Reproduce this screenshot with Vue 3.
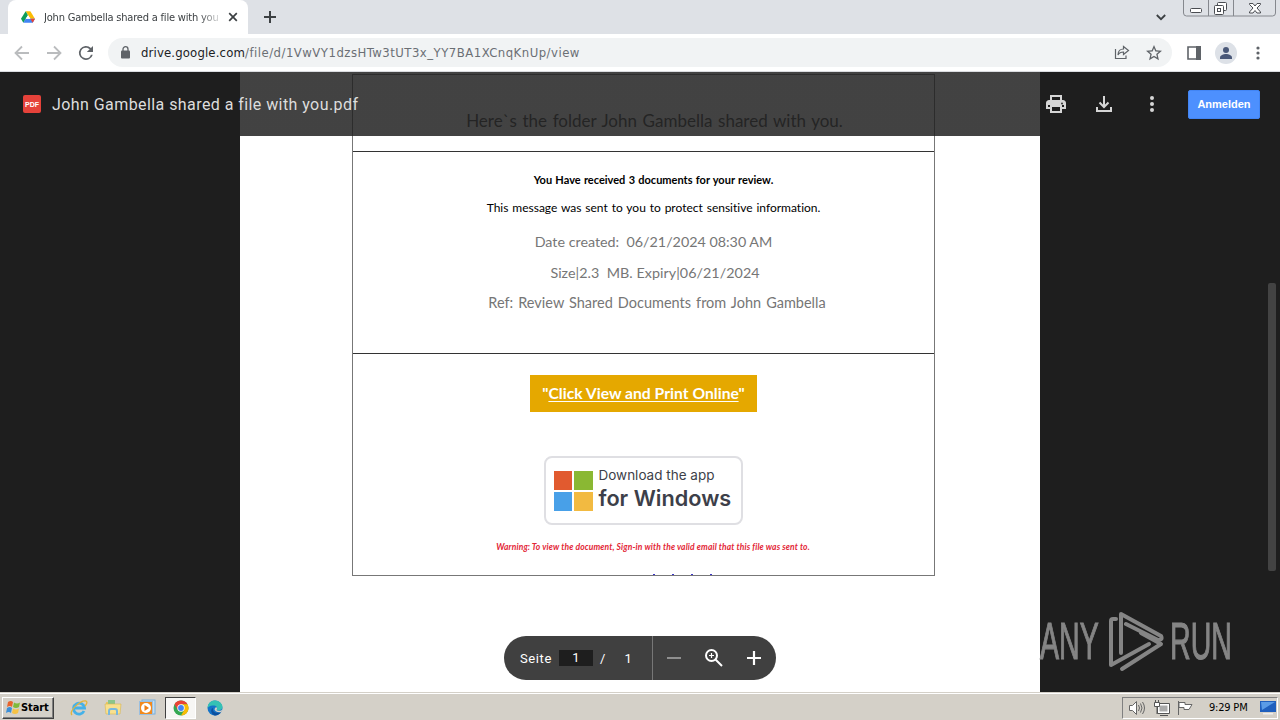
<script setup>
import { ref } from 'vue';

const page = ref(1);

const details = [
  { cls: 'date', text: 'Date created:  06/21/2024 08:30 AM' },
  { cls: 'size', text: 'Size|2.3  MB. Expiry|06/21/2024' },
  { cls: 'ref', text: 'Ref: Review Shared Documents from John Gambella' },
];
</script>

<template>
  <div class="desktop">
    <div class="tab-strip">
      <div class="tab">
        <svg class="drive-icon" width="14" height="14" viewBox="0 0 24 22">
          <path d="M8 1h8l8 13h-8z" fill="#fbbc04" />
          <path d="M8 1l4 7L4 21 0 14z" fill="#0f9d58" />
          <path d="M8 14h16l-4 7H4z" fill="#4285f4" />
          <path d="M16 14h8l-4 7z" fill="#ea4335" />
          <path d="M12 8l4 6H8z" fill="#fff" />
        </svg>
        <span class="tab-title">John Gambella shared a file with you</span>
        <svg class="tab-close" width="10" height="10" viewBox="0 0 10 10">
          <path d="M1.2 1.2l7.6 7.6M8.8 1.2L1.2 8.8" stroke="#3c4043" stroke-width="1.7" />
        </svg>
      </div>
      <svg class="new-tab" width="12" height="12" viewBox="0 0 12 12">
        <path d="M6 0v12M0 6h12" stroke="#3c4043" stroke-width="2" />
      </svg>
      <svg class="chevron" width="10" height="7" viewBox="0 0 10 7">
        <path d="M.8 1L5 5.2 9.2 1" fill="none" stroke="#3c4043" stroke-width="1.8" />
      </svg>
      <svg class="window-buttons" width="94" height="18" viewBox="0 0 94 18">
        <path d="M.5 0v13q0 3 3 3h86q3 0 3-3V0M25.500 0v16M50.500 0v16" fill="none" stroke="#85888e" />
        <g fill="#fff" stroke="#4a4d52">
          <rect x="7.500" y="8.500" width="11" height="4" rx="1" />
          <rect x="34.500" y="2.500" width="9" height="8" rx="1" />
          <rect x="31.500" y="5.500" width="9" height="9" rx="1" />
          <rect x="34.500" y="8.500" width="3" height="3" />
          <path d="M66.500 3.500h3.500l2 2.500 2-2.500h3.500v1L74 8l3.500 4v1H74l-2-2.500-2 2.500h-3.500v-1L70 8l-3.500-3.500z" />
        </g>
      </svg>
    </div>

    <div class="toolbar">
      <svg class="nav back" width="16" height="16" viewBox="0 0 16 16">
        <path d="M15 8H2M8 1.500L1.500 8 8 14.500" />
      </svg>
      <svg class="nav forward" width="16" height="16" viewBox="0 0 16 16">
        <path d="M1 8h13M8 1.500L14.500 8 8 14.500" />
      </svg>
      <svg class="reload" width="24" height="24" viewBox="0 0 24 24">
        <path fill="#5f6368" d="M17.650 6.350A8 8 0 1 0 19.730 14h-2.080A6 6 0 1 1 12 6c1.660 0 3.140.69 4.220 1.780L13 11h7V4z" transform="translate(1.400 1.400) scale(.88)" />
      </svg>
      <div class="address">
        <svg class="lock" width="9" height="13" viewBox="0 0 9 13">
          <rect y="4.500" width="9" height="8" rx="1" fill="#5f6368" />
          <path d="M2 5V3.200a2.500 2.500 0 0 1 5 0V5" fill="none" stroke="#5f6368" stroke-width="1.300" />
        </svg>
        <span class="url"><b>drive.google.com</b>/file/d/1VwVY1dzsHTw3tUT3x_YY7BA1XCnqKnUp/view</span>
        <svg class="share" width="16" height="15" viewBox="0 0 16 15" fill="none" stroke="#5f6368" stroke-width="1.200">
          <path d="M1.500 4v9.500H12V10.500M9.500 1.500l5 4-5 4V7C7 7 5 8 4 10c0-4 2.500-6 5.500-6z" />
        </svg>
        <svg class="star" width="16" height="16" viewBox="2 2 20 20">
          <path fill="#5f6368" d="M22 9.240l-7.190-.62L12 2 9.190 8.630 2 9.240l5.460 4.730L5.820 21 12 17.270 18.180 21l-1.630-7.030zM12 15.400l-3.760 2.270 1-4.280-3.320-2.880 4.380-.38L12 6.100l1.710 4.040 4.380.38-3.320 2.880 1 4.280z" />
        </svg>
      </div>
      <svg class="side-panel" width="14" height="14" viewBox="0 0 14 14">
        <path d="M1 1h12v12H1z" fill="none" stroke="#5f6368" stroke-width="1.600" />
        <path d="M9 0h5v14H9z" fill="#5f6368" />
      </svg>
      <svg class="avatar" width="22" height="22" viewBox="0 0 22 22">
        <circle cx="11" cy="11" r="11" fill="#dde1e7" />
        <circle cx="11" cy="8" r="3" fill="#4a5878" />
        <path d="M5 17v-1.500c0-2.300 3.500-3.500 6-3.500s6 1.200 6 3.500V17z" fill="#4a5878" />
      </svg>
      <svg class="menu" width="4" height="14" viewBox="0 0 4 14" fill="#5f6368">
        <circle cx="2" cy="2" r="1.600" /><circle cx="2" cy="7" r="1.600" /><circle cx="2" cy="12" r="1.600" />
      </svg>
    </div>

    <main class="viewer">
      <div class="sheet">
        <div class="frame">
          <section class="cell heading-cell">
            <p class="folder">Here`s the folder John Gambella shared with you.</p>
          </section>
          <section class="cell info-cell">
            <p class="received">You Have received 3 documents for your review.</p>
            <p class="message">This message was sent to you to protect sensitive information.</p>
            <p v-for="line in details" :key="line.cls" class="detail" :class="line.cls">{{ line.text }}</p>
          </section>
          <section class="cell action-cell">
            <a class="view-button">"<u>Click View and Print Online</u>"</a>
            <div class="download">
              <div class="win-logo"><i></i><i></i><i></i><i></i></div>
              <div class="download-text">
                <span class="small">Download the app</span>
                <span class="big">for Windows</span>
              </div>
            </div>
            <p class="warning">Warning: To view the document, Sign-in with the valid email that this file was sent to.</p>
            <div class="cut-line"><i></i><i></i><i></i><i></i></div>
          </section>
        </div>
      </div>

      <header class="viewer-bar">
        <span class="pdf-icon"><span>PDF</span></span>
        <span class="file-name">John Gambella shared a file with you.pdf</span>
        <svg class="print" width="24" height="24" viewBox="0 0 24 24" fill="#d6d6d6">
          <path d="M19 8h-1V3H6v5H5c-1.660 0-3 1.340-3 3v6h4v4h12v-4h4v-6c0-1.660-1.340-3-3-3zM8 5h8v3H8V5zm8 14H8v-4h8v4zm2-4v-2H6v2H4v-4c0-.55.45-1 1-1h14c.55 0 1 .45 1 1v4h-2z" />
          <path d="M4 10h16v3H4z" /><circle cx="18" cy="11.500" r="1" fill="#333" />
        </svg>
        <svg class="save" width="24" height="24" viewBox="0 0 24 24" fill="none" stroke="#d6d6d6" stroke-width="2">
          <path d="M12 4v10M7.500 10.500L12 15l4.500-4.500M5 15v4h14v-4" />
        </svg>
        <svg class="more" width="24" height="24" viewBox="0 0 24 24" fill="#d6d6d6">
          <circle cx="12" cy="6" r="2" /><circle cx="12" cy="12" r="2" /><circle cx="12" cy="18" r="2" />
        </svg>
        <button class="sign-in">Anmelden</button>
      </header>

      <div class="scrollbar"></div>

      <div class="pager">
        <span class="label">Seite</span>
        <span class="current">{{ page }}</span>
        <span class="slash">/</span>
        <span class="total">1</span>
        <div class="zoom">
          <svg width="14" height="14" viewBox="0 0 14 14"><path d="M0 7h14" stroke="#8f8f8f" stroke-width="2" /></svg>
          <svg width="18" height="18" viewBox="0 0 18 18" fill="none" stroke="#fff" stroke-width="2">
            <circle cx="6.500" cy="6.500" r="5.500" /><path d="M10.500 10.500l6.500 6.500" />
            <path d="M6.500 4v5M4 6.500h5" stroke-width="1.200" />
          </svg>
          <svg width="14" height="14" viewBox="0 0 14 14"><path d="M7 0v14M0 7h14" stroke="#fff" stroke-width="2.200" /></svg>
        </div>
      </div>

      <div class="watermark">
        <span class="word any">ANY</span>
        <svg width="56" height="64" viewBox="0 0 56 64" fill="none" stroke="#858585" stroke-width="4" stroke-linecap="round" stroke-linejoin="round">
          <path d="M8 9H5q-2 0-2 2v44l38-21" />
          <path d="M13 43V4l40 22q2 4-3 4L18 14" />
          <path d="M33 23l20 11-39 25" />
        </svg>
        <span class="word run">RUN</span>
      </div>
    </main>

    <footer class="taskbar">
      <div class="start">
        <svg width="15" height="15" viewBox="0 0 15 15">
          <path d="M2 2q3-2 5 0L6 7Q4 5 1 7z" fill="#e8642d" />
          <path d="M8 2.500q3 2 6 0L13 7q-3 2-6 0z" fill="#7fba3c" />
          <path d="M1 8q3-2 5 0l-1 5Q3 11 0 13z" fill="#3c8fd8" />
          <path d="M7 8.500q3 2 6 0L12 13q-3 2-6 0z" fill="#f6c244" />
        </svg>
        <span>Start</span>
      </div>
      <div class="task ie">
        <svg width="18" height="18" viewBox="0 0 18 18" fill="none">
          <path d="M14 12a5.500 5.500 0 1 1 .5-3H5" stroke="#45b1e8" stroke-width="2.800" />
          <path d="M2 16C-2 12 11 1 16 2c2 1 0 4-1 5" stroke="#e3b43b" stroke-width="1.300" />
        </svg>
      </div>
      <div class="task">
        <svg width="18" height="18" viewBox="0 0 18 18">
          <path d="M2 3h5l1 2h7v9H2z" fill="#e9c763" /><path d="M4 1h7v4H4z" fill="#8bc58a" />
          <path d="M1 5h16l-1 10H2z" fill="#f8e08e" stroke="#d7b552" stroke-width=".6" />
          <path d="M5 16v-4q0-2 2-2h4q2 0 2 2v4" fill="none" stroke="#79b8dd" stroke-width="2" />
        </svg>
      </div>
      <div class="task">
        <svg width="18" height="18" viewBox="0 0 18 18">
          <rect x="4" y="1" width="13" height="14" fill="#c3def2" stroke="#78aeda" />
          <rect x="1.500" y="2.500" width="13" height="13" fill="#f28a1d" stroke="#9abfe0" />
          <circle cx="8" cy="9" r="5" fill="#fff" /><path d="M6.500 6l4.500 3-4.500 3z" fill="#ee7d12" />
        </svg>
      </div>
      <div class="task active">
        <svg width="16" height="16" viewBox="0 0 16 16">
          <circle cx="8" cy="8" r="7.500" fill="#34a853" />
          <path d="M1.500 4.250A7.500 7.500 0 0 1 14.500 4.250H8L4.750 9.900z" fill="#ea4335" />
          <path d="M14.500 4.250A7.500 7.500 0 0 1 8 15.500l3.250-5.600L8 4.250z" fill="#fbbc04" />
          <circle cx="8" cy="8" r="3.700" fill="#fff" /><circle cx="8" cy="8" r="2.900" fill="#4285f4" />
        </svg>
      </div>
      <div class="task">
        <svg width="16" height="16" viewBox="0 0 16 16">
          <circle cx="8" cy="8" r="7.500" fill="#1473c8" />
          <path d="M.5 8C1 2 5 .5 8 .5c4 0 7.500 3 7.500 6.500 0 3-4 4-6 3 2-3-1-5-4-4.500C3 5.500 1 7 .5 8z" fill="#35c1b4" />
          <path d="M6 8c-1 4 3 6 8 4-2 3-5 3.500-6.500 3.500C4 14 3 9 6 8z" fill="#0c4f9e" />
          <path d="M9 7c2 1 .5 3 .5 3 2 1.500 5 1 6-1l-1 3c-4 1-7-1-7-3z" fill="#d4d0c8" />
        </svg>
      </div>
      <div class="tray">
        <svg width="18" height="16" viewBox="0 0 18 16" fill="none" stroke="#666">
          <path d="M1.500 5.500h3l4-4v13l-4-4h-3z" fill="#fff" /><path d="M10.500 5q2 3 0 6M12.500 3.500q3 4.500 0 9M14.500 2q4 6 0 12" />
        </svg>
        <svg width="17" height="16" viewBox="0 0 17 16" fill="none" stroke="#555">
          <path d="M5.500 4.500h10v8h-10z" fill="#aaa" stroke="#fff" stroke-width="2" /><path d="M4.500 3.500h12v10h-12zM7 15.500h8" />
          <path d="M1.500 2.500h5v4h-5zM2.500 0v2M5.500 0v2M4 7v7" fill="#fff" />
        </svg>
        <svg width="17" height="16" viewBox="0 0 17 16" fill="#fff" stroke="#666">
          <path d="M1.500 1v14M2 2.500h6v2h7l-3 5H7v-2H2z" />
        </svg>
        <span class="clock">9:29 PM</span>
        <svg class="show-desktop" width="16" height="14" viewBox="0 0 16 14">
          <path d="M0 0h16v11H0z" fill="#1f5fbd" /><path d="M1 1h14L2 9z" fill="#5a9be6" /><path d="M3 12h10v1.500H3z" fill="#eee" />
        </svg>
      </div>
    </footer>
  </div>
</template>

<style>
body {
  margin: 0;
  overflow: hidden;
}
</style>

<style scoped>
* {
  box-sizing: border-box;
}

p {
  margin: 0;
}

svg {
  display: block;
  flex: none;
}

.desktop {
  width: 1280px;
  height: 720px;
  display: flex;
  flex-direction: column;
  overflow: hidden;
  font-family: "Liberation Sans", Arial, sans-serif;
}

.tab-strip {
  height: 34px;
  flex: none;
  display: flex;
  background: #dee1e6;
  padding-left: 8px;
}

.tab {
  width: 240px;
  height: 34px;
  display: flex;
  align-items: center;
  padding: 0 12px 0 13px;
  background: #fff;
  border-radius: 8px 8px 0 0;
}

.tab-title {
  width: 175px;
  margin-left: 9px;
  white-space: nowrap;
  font-family: "DejaVu Sans Condensed", "DejaVu Sans", sans-serif;
  font-size: 11px;
  letter-spacing: -0.2px;
  color: #3c4043;
  mask-image: linear-gradient(to right, #000 155px, transparent 180px);
}

.tab-close {
  margin-left: 9px;
}

.new-tab {
  margin: 11px 0 0 16px;
}

.chevron {
  margin: 14px 0 0 auto;
}

.window-buttons {
  margin: 0 3px 0 17px;
}

.toolbar {
  height: 38px;
  flex: none;
  display: flex;
  align-items: center;
  padding: 0 20px 0 14px;
  background: #fff;
  border-bottom: 1px solid #dadce0;
}

.nav {
  fill: none;
  stroke: #babcbe;
  stroke-width: 1.8;
}

.forward {
  margin-left: 16px;
}

.reload {
  margin-left: 12px;
}

.address {
  width: 1064px;
  height: 29px;
  margin-left: 10px;
  display: flex;
  align-items: center;
  border-radius: 15px;
  background: #f1f3f4;
}

.lock {
  margin-left: 13px;
}

.url {
  margin-left: 11px;
  font-family: "DejaVu Sans Condensed", "DejaVu Sans", sans-serif;
  font-size: 13px;
  letter-spacing: 0.48px;
  color: #6b6f74;
  white-space: nowrap;
}

.url b {
  font-weight: 400;
  letter-spacing: 0.15px;
  color: #202124;
}

.share {
  margin-left: auto;
}

.star {
  margin: 0 10px 0 16px;
}

.side-panel {
  margin-left: 15px;
}

.avatar {
  margin-left: 14px;
}

.menu {
  margin-left: auto;
}

.viewer {
  position: relative;
  height: 620px;
  flex: none;
  overflow: hidden;
  background: #1e1e1e;
}

.sheet {
  width: 800px;
  height: 620px;
  margin: 0 auto;
  padding: 2px 0 0 112px;
  background: #fff;
  font-family: Lato, "Liberation Sans", sans-serif;
  font-variant-ligatures: none;
}

.frame {
  width: 583px;
  border: solid #777;
  border-width: 1px;
}

.cell {
  display: flex;
  flex-direction: column;
  align-items: center;
  white-space: pre;
}

.cell + .cell {
  border-top: 1px solid #333;
}

.heading-cell {
  height: 76px;
  padding: 34px 0 0 22px;
}

.folder {
  font-size: 17px;
  line-height: 24px;
  word-spacing: 1.3px;
  color: #444;
}

.info-cell {
  height: 202px;
  padding: 21px 0 0 20px;
}

.received {
  height: 28px;
  font-size: 11px;
  line-height: 14px;
  font-weight: 700;
  word-spacing: 0.6px;
}

.message {
  height: 30px;
  font-size: 12px;
  line-height: 14px;
  word-spacing: 0.8px;
}

.detail {
  height: 31px;
  font-size: 14.3px;
  line-height: 22px;
  color: #767676;
}

.size {
  letter-spacing: 0.05px;
  margin-left: 3px;
}

.ref {
  margin: -1px 0 0 7px;
  font-size: 14.5px;
  word-spacing: 1.3px;
}

.action-cell {
  height: 222px;
  padding-top: 21px;
}

.view-button {
  width: 227px;
  height: 37px;
  line-height: 37px;
  text-align: center;
  background: #e5a800;
  color: #fff;
  font-size: 15.7px;
  font-weight: 700;
}

.view-button u {
  text-underline-offset: 2px;
  text-decoration-thickness: 1px;
}

.download {
  width: 199px;
  height: 69px;
  margin: 44px 1px 0 0;
  display: flex;
  padding: 13px 0 0 8px;
  border: 2px solid #dfdfe3;
  border-radius: 8px;
  font-family: Inter, sans-serif;
  color: #3d3f49;
}

.win-logo {
  width: 39px;
  height: 40px;
  display: grid;
  grid-template-columns: 1fr 1fr;
  gap: 2px;
}

.win-logo i:nth-child(1) { background: #e15a2f; }
.win-logo i:nth-child(2) { background: #8ab833; }
.win-logo i:nth-child(3) { background: #48a0e8; }
.win-logo i:nth-child(4) { background: #f2ba41; }

.download-text {
  margin: -4px 0 0 6px;
  display: flex;
  flex-direction: column;
}

.small {
  font-size: 13.5px;
  line-height: 17px;
}

.big {
  font-size: 21.7px;
  line-height: 28px;
  font-weight: 600;
}

.warning {
  margin: 15px 0 0 19px;
  font-size: 8.5px;
  line-height: 14px;
  letter-spacing: 0.13px;
  font-style: italic;
  font-weight: 700;
  color: #e32636;
}

.cut-line {
  width: 60px;
  display: flex;
  justify-content: space-between;
  margin: 20px 0 0 78px;
}

.cut-line i {
  width: 2px;
  height: 1px;
  background: #3a35c8;
}

.viewer-bar {
  position: absolute;
  top: 0;
  left: 0;
  width: 1280px;
  height: 64px;
  display: flex;
  align-items: center;
  padding: 0 20px 0 23px;
  background: linear-gradient(to right, transparent 240px, rgba(30, 30, 30, 0.84) 240px, rgba(30, 30, 30, 0.84) 1040px, transparent 1040px);
}

.pdf-icon {
  width: 18px;
  height: 18px;
  display: flex;
  align-items: center;
  justify-content: center;
  border-radius: 2px;
  background: #e5423a;
  color: #fff;
  font-size: 7px;
  font-weight: 700;
}

.file-name {
  margin-left: 11px;
  font-family: Roboto, sans-serif;
  font-size: 16px;
  letter-spacing: 0.43px;
  color: #ddd;
}

.print {
  margin-left: auto;
}

.save,
.more {
  margin-left: 24px;
}

.sign-in {
  width: 72px;
  height: 29px;
  margin-left: 24px;
  padding: 0;
  border: 1px solid #4285f4;
  border-radius: 2px;
  background: #4d90fe;
  color: #fff;
  font: 700 11px "Liberation Sans", sans-serif;
}

.scrollbar {
  position: absolute;
  top: 211px;
  right: 4px;
  width: 8px;
  height: 288px;
  border-radius: 2px;
  background: #434343;
}

.pager {
  position: absolute;
  top: 564px;
  left: 504px;
  width: 272px;
  height: 44px;
  display: flex;
  align-items: center;
  padding-left: 16px;
  border-radius: 22px;
  background: #404040;
  color: #fff;
  font-family: Roboto, sans-serif;
  font-size: 13px;
}

.label {
  width: 39px;
  letter-spacing: 0.6px;
}

.current {
  width: 34px;
  line-height: 16px;
  text-align: center;
  background: #1e1e1e;
}

.slash {
  margin-left: 7px;
}

.total {
  margin-left: 19px;
}

.zoom {
  height: 44px;
  margin-left: auto;
  width: 124px;
  display: flex;
  align-items: center;
  justify-content: space-between;
  padding: 0 15px 0 14px;
  border-left: 1px solid #777;
}

.watermark {
  position: absolute;
  top: 536px;
  left: 1040px;
  width: 192px;
  display: flex;
  align-items: center;
  color: #858585;
}

.word {
  width: 62px;
  flex: none;
  font: 51px/68px "Liberation Sans", sans-serif;
  -webkit-text-stroke: 1.2px #858585;
  transform: scaleX(0.56);
  transform-origin: left;
}

.watermark svg {
  margin: 0 6px;
}

.taskbar {
  height: 28px;
  flex: none;
  display: flex;
  align-items: center;
  padding: 2px 2px 0;
  border-top: 1px solid #d4d0c8;
  box-shadow: inset 0 1px #fff;
  background: #d4d0c8;
}

.start {
  width: 52px;
  height: 22px;
  display: flex;
  align-items: center;
  padding-left: 3px;
  border: 1px solid;
  border-color: #fff #404040 #404040 #fff;
  box-shadow: inset -1px -1px #808080;
  font: 700 11px "DejaVu Sans Condensed", "DejaVu Sans", sans-serif;
  letter-spacing: -0.1px;
}

.task {
  width: 31px;
  height: 22px;
  margin-left: 3px;
  display: flex;
  align-items: center;
  justify-content: center;
}

.ie {
  margin-left: 9px;
}

.active {
  border: 1px solid;
  border-color: #404040 #fff #fff #404040;
  background: #f7f6f4;
}

.tray {
  width: 156px;
  height: 22px;
  margin-left: auto;
  display: flex;
  align-items: center;
  gap: 7px;
  padding-left: 5px;
  border: 1px solid;
  border-color: #808080 #fff #fff #808080;
}

.clock {
  margin-left: 8px;
  width: 40px;
  font: 11px "DejaVu Sans Condensed", sans-serif;
  letter-spacing: -0.2px;
  white-space: nowrap;
}

.show-desktop {
  margin-left: 4px;
}
</style>
